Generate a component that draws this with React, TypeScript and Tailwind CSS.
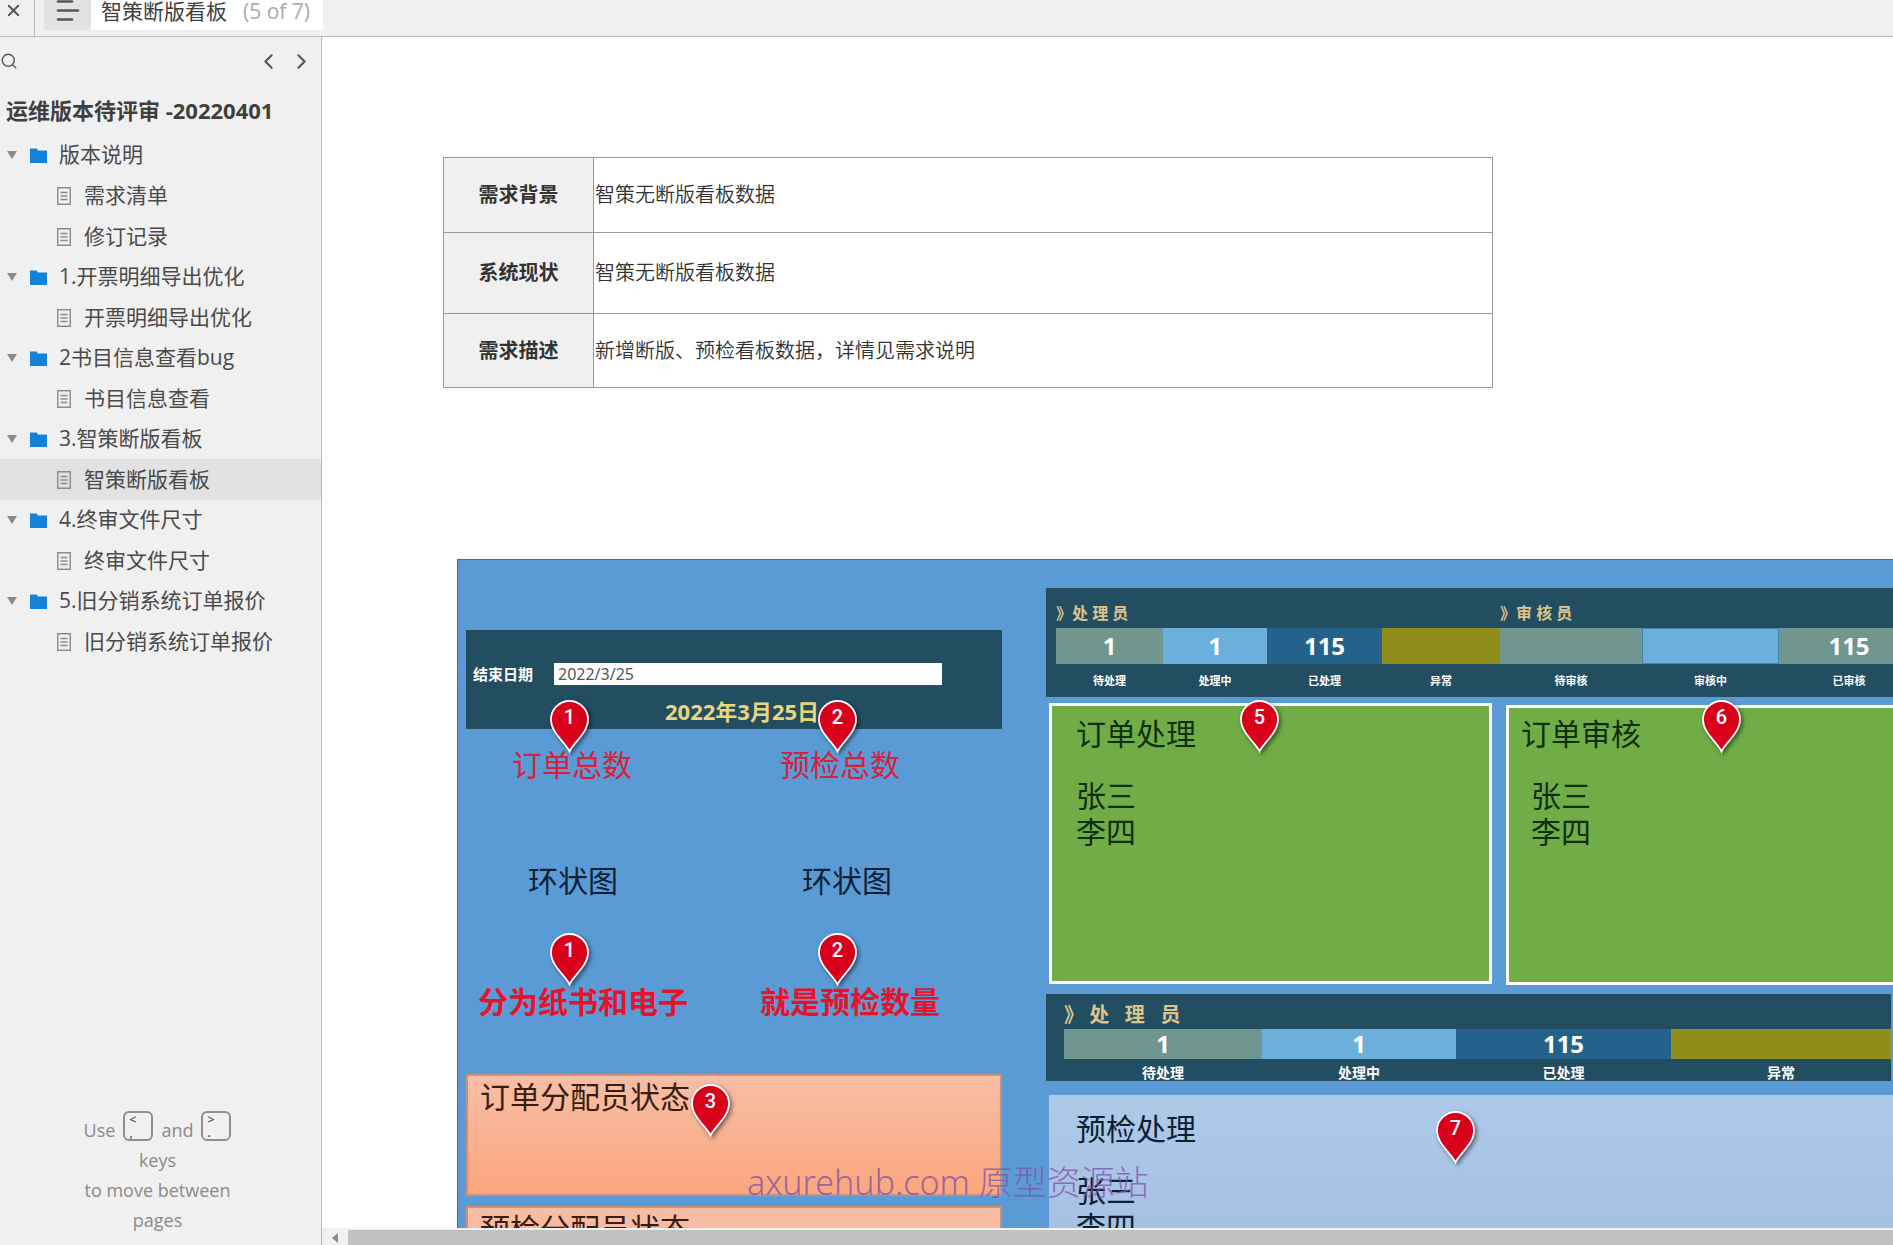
import { useState } from "react";
import { ChevronLeft, ChevronRight, Search, X } from "lucide-react";

type TreeItem = { name: string; folder?: boolean };

const tree: TreeItem[] = [
  { name: "版本说明", folder: true },
  { name: "需求清单" },
  { name: "修订记录" },
  { name: "1.开票明细导出优化", folder: true },
  { name: "开票明细导出优化" },
  { name: "2书目信息查看bug", folder: true },
  { name: "书目信息查看" },
  { name: "3.智策断版看板", folder: true },
  { name: "智策断版看板" },
  { name: "4.终审文件尺寸", folder: true },
  { name: "终审文件尺寸" },
  { name: "5.旧分销系统订单报价", folder: true },
  { name: "旧分销系统订单报价" },
];

const requirements = [
  { label: "需求背景", text: "智策无断版看板数据", height: "h-[75px]" },
  { label: "系统现状", text: "智策无断版看板数据", height: "h-[81px]" },
  { label: "需求描述", text: "新增断版、预检看板数据，详情见需求说明", height: "h-[74px]" },
];

const handlerStats = [
  { value: "1", label: "待处理", color: "bg-[#71958f]", width: "w-[107px]" },
  { value: "1", label: "处理中", color: "bg-[#6bb0da]", width: "w-[104px]" },
  { value: "115", label: "已处理", color: "bg-[#24628c]", width: "w-[115px]" },
  { value: "", label: "异常", color: "bg-[#8f8d1c]", width: "w-[118px]" },
];

const reviewerStats = [
  { value: "", label: "待审核", color: "bg-[#71958f]", width: "w-[142px]" },
  { value: "", label: "审核中", color: "bg-[#6bb0da] border border-[#3f86ae]", width: "w-[137px]" },
  { value: "115", label: "已审核", color: "bg-[#71958f]", width: "w-[140px]" },
];

const precheckStats = [
  { value: "1", label: "待处理", color: "bg-[#71958f]", width: "w-[198px]" },
  { value: "1", label: "处理中", color: "bg-[#6bb0da]", width: "w-[194px]" },
  { value: "115", label: "已处理", color: "bg-[#24628c]", width: "w-[215px]" },
  { value: "", label: "异常", color: "bg-[#8f8d1c]", width: "w-[220px]" },
];

// Notas de Axure colocadas sobre el tablero
const pins = [
  { n: 1, place: "left-[92px] top-[140px]" },
  { n: 2, place: "left-[360px] top-[140px]" },
  { n: 1, place: "left-[92px] top-[373px]" },
  { n: 2, place: "left-[360px] top-[373px]" },
  { n: 3, place: "left-[233px] top-[524px]" },
  { n: 5, place: "left-[782px] top-[140px]" },
  { n: 6, place: "left-[1244px] top-[140px]" },
  { n: 7, place: "left-[978px] top-[551px]" },
];

const FolderIcon = () => (
  <svg className="h-[15px] w-[17px]" viewBox="0 0 17 15" fill="#1482d8">
    <path d="M0 0.5h6.5l1.5 2h9V15H0z" />
  </svg>
);

const PageIcon = () => (
  <svg className="h-[18px] w-[14px]" viewBox="0 0 14 18" fill="none" stroke="#8c8c8c">
    <path d="M0.7 0.7h12.6v16.6H0.7z" strokeWidth="1.4" />
    <path d="M3.5 5.5h7M3.5 9h7M3.5 12.5h7" strokeWidth="1.3" />
  </svg>
);

const Pin = ({ n, place }: { n: number; place: string }) => (
  <button type="button" className={`absolute h-[53px] w-[39px] ${place}`}>
    <svg
      className="absolute inset-0 overflow-visible drop-shadow-[2px_2px_2px_rgba(0,0,0,0.5)]"
      width="39"
      height="53"
      viewBox="0 0 39 53"
    >
      <path
        d="M19.5 51.5C16 43 1 33 1 19.5a18.5 18.5 0 0 1 37 0C38 33 23 43 19.5 51.5z"
        fill="#d9001b"
        stroke="#fff"
        strokeWidth="1.8"
      />
    </svg>
    <span className="relative block h-full pt-[5px] text-center font-['Roboto',sans-serif] text-xl leading-6 font-medium text-white">
      {n}
    </span>
  </button>
);

type Stat = { value: string; label: string; color: string; width: string };

const StatGroup = ({ title, stats }: { title: string; stats: Stat[] }) => (
  <div>
    <h4 className="pb-[3px] text-base leading-6 font-bold text-[#dcc48a]">{title}</h4>
    <div className="flex">
      {stats.map((stat) => (
        <div key={stat.label} className={`shrink-0 text-center font-bold text-white ${stat.width}`}>
          <div className={`h-9 text-2xl leading-9 ${stat.color}`}>{stat.value}</div>
          <div className="pt-[9px] text-[11px] leading-4">{stat.label}</div>
        </div>
      ))}
    </div>
  </div>
);

const Sidebar = () => {
  const [selected, setSelected] = useState<string>("智策断版看板");

  return (
    <aside className="flex w-[322px] shrink-0 flex-col border-r border-[#b8b8b8] bg-[#f0f0f0]">
      <div className="flex h-12 items-center justify-between pr-[7px] text-[#555]">
        <button type="button" aria-label="Search">
          <Search size={18} strokeWidth={1.8} />
        </button>
        <div className="flex gap-2">
          <button type="button" aria-label="Previous page">
            <ChevronLeft size={25} strokeWidth={2} />
          </button>
          <button type="button" aria-label="Next page">
            <ChevronRight size={25} strokeWidth={2} />
          </button>
        </div>
      </div>
      <h2 className="h-[50px] pt-0.5 pl-1.5 text-[22px] leading-[46px] font-bold text-[#3f3f3f]">
        运维版本待评审 -20220401
      </h2>
      <nav className="flex flex-col text-[21px] text-[#4a4a4a]">
        {tree.map((item) =>
          item.folder ? (
            <button
              key={item.name}
              type="button"
              className="flex h-10 items-center pl-[7px] text-left"
            >
              <svg className="h-2 w-2.5" viewBox="0 0 10 8" fill="#8a8a8a">
                <path d="M0 0h10L5 8z" />
              </svg>
              <span className="mr-3 ml-[13px]">
                <FolderIcon />
              </span>
              {item.name}
            </button>
          ) : (
            <a
              key={item.name}
              href="#"
              onClick={() => setSelected(item.name)}
              className={`flex h-[41px] items-center gap-[13px] pl-[57px] ${
                selected === item.name ? "bg-[#e2e2e2]" : ""
              }`}
            >
              <PageIcon />
              {item.name}
            </a>
          )
        )}
      </nav>
      <div className="mt-auto pr-1.5 pb-2.5 text-center text-lg leading-[30px] text-[#8a8a8a]">
        <p className="flex items-end justify-center gap-2">
          Use
          <kbd className="mb-1 flex h-[30px] w-[30px] flex-col rounded-md border-2 border-[#8f8f8f] pl-1 text-left font-['Noto_Sans',sans-serif] text-xs leading-[13px] font-medium text-[#444]">
            <span>&lt;</span>
            <span>,</span>
          </kbd>
          and
          <kbd className="mb-1 flex h-[30px] w-[30px] flex-col rounded-md border-2 border-[#8f8f8f] pl-1 text-left font-['Noto_Sans',sans-serif] text-xs leading-[13px] font-medium text-[#444]">
            <span>&gt;</span>
            <span>.</span>
          </kbd>
        </p>
        <p>keys</p>
        <p>to move between</p>
        <p>pages</p>
      </div>
    </aside>
  );
};

const Dashboard = () => (
  <section className="relative mt-[171px] ml-[135px] flex w-[1640px] border-t border-l border-[#41719c] bg-[#5b9bd5] font-['Noto_Sans','Noto_Sans_CJK_SC',sans-serif] text-3xl leading-9 text-[#0c2033]">
    <div className="w-[544px] shrink-0 pt-[70px] pl-2">
      <div className="h-[99px] bg-[#234d61] pt-[33px]">
        <div className="flex items-center pl-[7px] text-[15px] leading-[22px]">
          <label htmlFor="endDate" className="w-[81px] font-bold text-white">
            结束日期
          </label>
          <input
            id="endDate"
            type="text"
            defaultValue="2022/3/25"
            className="h-[22px] w-[388px] bg-white px-1 text-base leading-[22px] text-[#555]"
          />
        </div>
        <p className="pt-2.5 pl-[199px] text-[22px] leading-8 font-bold text-[#ead67c]">2022年3月25日</p>
      </div>
      <div className="mt-[18px] grid grid-cols-2 text-[#d8203a]">
        <p className="pl-[46px]">订单总数</p>
        <p className="pl-[46px]">预检总数</p>
      </div>
      <div className="mt-20 grid grid-cols-2">
        <p className="pl-[62px]">环状图</p>
        <p className="pl-[68px]">环状图</p>
      </div>
      <div className="mt-[85px] grid grid-cols-2 font-bold text-[#e8132b]">
        <p className="pl-3">分为纸书和电子</p>
        <p className="pl-[26px]">就是预检数量</p>
      </div>
      <div className="mt-[54px] h-[122px] border-2 border-[#cf8f76] bg-linear-to-b from-[#f7bea6] to-[#fba67d] pt-[3px] pl-3 text-[#3a1c10]">
        订单分配员状态
      </div>
      <div className="mt-2.5 h-[122px] border-2 border-[#cf8f76] bg-linear-to-b from-[#f7bea6] to-[#fba67d] pt-[3px] pl-3 text-[#3a1c10]">
        预检分配员状态
      </div>
    </div>

    <div className="ml-11 flex-1 pt-7">
      <div className="flex h-[109px] bg-[#234d61] pt-[13px] pl-2.5">
        <StatGroup title="》处 理 员" stats={handlerStats} />
        <StatGroup title="》审 核 员" stats={reviewerStats} />
      </div>

      <div className="mt-1.5 flex gap-3.5 pl-[3px] text-[#0f2f0a]">
        <div className="h-[281px] w-[443px] shrink-0 border-3 border-white bg-[#70ad47] pt-2.5 pl-6">
          <h3>订单处理</h3>
          <p className="mt-[26px]">张三</p>
          <p>李四</p>
        </div>
        <div className="mt-0.5 h-[280px] flex-1 border-3 border-white bg-[#70ad47] pt-2 pl-3">
          <h3>订单审核</h3>
          <p className="mt-[26px] pl-2.5">张三</p>
          <p className="pl-2.5">李四</p>
        </div>
      </div>

      <div className="mt-[9px] h-[87px] w-[845px] overflow-hidden bg-[#234d61] pt-[7px] pl-[18px]">
        <h4 className="text-xl leading-7 font-bold whitespace-pre text-[#dcc48a]">》 处   理   员</h4>
        <div className="flex">
          {precheckStats.map((stat) => (
            <div key={stat.label} className={`shrink-0 text-center font-bold text-white ${stat.width}`}>
              <div className={`h-[30px] text-2xl leading-[30px] ${stat.color}`}>{stat.value}</div>
              <div className="pt-1 text-sm leading-5">{stat.label}</div>
            </div>
          ))}
        </div>
      </div>

      <div className="mt-3.5 ml-[3px] h-[281px] bg-linear-to-b from-[#aecae8] to-[#9cb6e0] pt-4 pl-[27px]">
        <h3>预检处理</h3>
        <p className="mt-[26px]">张三</p>
        <p>李四</p>
      </div>
    </div>

    {pins.map((pin) => (
      <Pin key={pin.place} n={pin.n} place={pin.place} />
    ))}
  </section>
);

const App = () => {
  return (
    <div className="flex h-screen flex-col overflow-hidden bg-white font-['Open_Sans','Noto_Sans_CJK_SC',sans-serif]">
      <header className="flex h-[37px] shrink-0 items-start border-b border-[#b8b8b8] bg-[#f0f0f0]">
        <button
          type="button"
          aria-label="Close"
          className="h-9 w-[35px] border-r border-[#b8b8b8] pb-4 pl-1 text-[#555]"
        >
          <X size={19} strokeWidth={2.4} />
        </button>
        <button
          type="button"
          aria-label="Toggle pages"
          className="ml-[9px] h-[30px] w-[47px] rounded-b bg-[#e2e2e2] pl-3"
        >
          <svg className="h-[30px] w-6" viewBox="0 0 24 30" fill="none" stroke="#555" strokeWidth="2.6" strokeLinecap="round">
            <path d="M2 1.5h14M2 10.5h20M2 19.5h14" />
          </svg>
        </button>
        <h1 className="flex h-[30px] w-[232px] gap-4 bg-white pl-2.5 text-[21px] leading-[22px] text-[#3f3f3f]">
          智策断版看板
          <span className="text-[#aaa]">(5 of 7)</span>
        </h1>
      </header>

      <div className="flex min-h-0 flex-1">
        <Sidebar />
        <div className="flex min-w-0 flex-1 flex-col">
          <main className="min-h-0 flex-1 overflow-hidden pt-[120px]">
            <table className="ml-[121px] w-[1050px] border-collapse text-xl text-[#333]">
              <tbody>
                {requirements.map((row) => (
                  <tr key={row.label} className={row.height}>
                    <th scope="row" className="w-[150px] border border-[#999] bg-[#f0f0f0] font-bold">
                      {row.label}
                    </th>
                    <td className="border border-[#999] pl-px font-[350]">{row.text}</td>
                  </tr>
                ))}
              </tbody>
            </table>
            <Dashboard />
          </main>
          <div className="flex h-[17px] shrink-0 border-t-2 border-[#f1f1f1] bg-[#f1f1f1]">
            <button type="button" aria-label="Scroll left" className="w-[26px] pl-2.5">
              <svg className="h-2.5 w-1.5" viewBox="0 0 6 10" fill="#8a8a8a">
                <path d="M6 0v10L0 5z" />
              </svg>
            </button>
            <div className="flex-1 bg-[#c1c1c1]" />
          </div>
        </div>
      </div>

      <p className="pointer-events-none absolute top-[1158px] left-[747px] font-['Noto_Sans','Noto_Sans_CJK_SC',sans-serif] text-[34px] leading-[48px] font-light text-[#8253a8]/80">
        axurehub.com 原型资源站
      </p>
    </div>
  );
};

export default App;
